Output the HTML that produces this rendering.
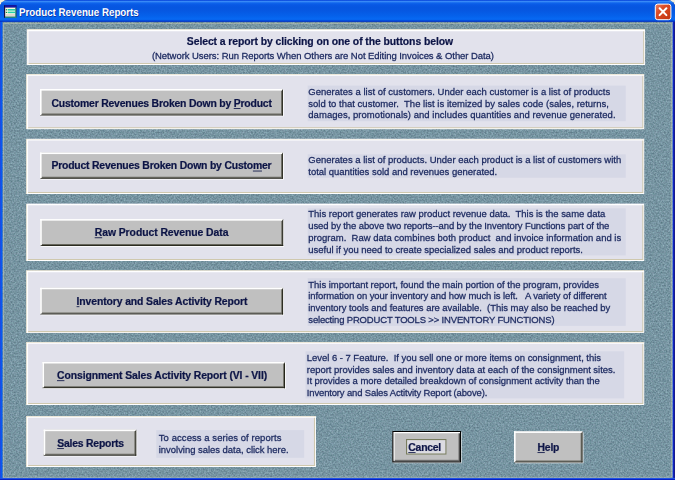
<!DOCTYPE html>
<html>
<head>
<meta charset="utf-8">
<title>Product Revenue Reports</title>
<style>
html,body{margin:0;padding:0;}
body{width:675px;height:480px;overflow:hidden;position:relative;background:#f3efdc;font-family:"Liberation Sans",Arial,sans-serif;}
#win{position:absolute;left:0;top:0;width:675px;height:480px;overflow:hidden;background:#7d97a6;border-radius:7.5px 7.5px 0 0;}
#noise,#chrome{position:absolute;left:0;top:0;}
#title{position:absolute;left:19px;top:5.45px;font-weight:bold;font-size:11.2px;line-height:14px;color:#fff;text-shadow:0.8px 0.8px 0.3px rgba(10,31,128,0.75);white-space:nowrap;transform-origin:0 0;transform:scaleX(0.872) rotate(0.03deg);}
#w{position:absolute;left:0;top:0;width:8000px;height:5690px;transform-origin:0 0;transform:scale(0.084375);}
#wt{position:absolute;left:0;top:0;width:8000px;height:5690px;transform-origin:0 0;transform:scale(0.084375) rotate(0.004deg);will-change:transform;}
.panel{position:absolute;background:#e2e2ec;box-sizing:border-box;box-shadow:inset 6px 6px 0 #d8d0b4, inset -11px -11px 0 #ffffff, inset 22px 22px 0 #ffffff, inset -23px -23px 0 #cfc8ae;}
.dbox{position:absolute;background:#d6d8e6;}
.ln{position:absolute;white-space:pre;line-height:140px;color:#16245c;-webkit-text-stroke:3px #16245c;}
.ln.b{font-weight:bold;color:#0a1244;-webkit-text-stroke:2.5px #0a1244;}
.btn{position:absolute;box-sizing:border-box;background:#c0c0c0;border-style:solid;border-width:19px 12px 12px 19px;border-color:#ffffff #24241a #24241a #ffffff;box-shadow:inset -10px -10px 0 #6a6a60, 11px 11px 0 rgba(255,255,255,0.9);}
.btn.def{border:12px solid #000;box-shadow:inset 15px 15px 0 #fff, inset -8px -8px 0 #303030, inset -20px -20px 0 #808080, 11px 11px 0 rgba(255,255,255,0.6);}
.focus{position:absolute;box-sizing:border-box;border:13px solid #787c5e;background:#dcdce2;}
u{text-decoration:underline;text-decoration-thickness:10px;text-underline-offset:14px;}
</style>
</head>
<body>
<div id="win">
<svg id="noise" width="675" height="480"><filter id="nf" x="0" y="0" width="100%" height="100%" color-interpolation-filters="sRGB"><feTurbulence type="fractalNoise" baseFrequency="0.62" numOctaves="2" seed="7"/><feColorMatrix type="matrix" values="0.31 0.05 0 0 0.285  0.31 0 0.05 0 0.402  0.31 0 0 0 0.478  0 0 0 0 1"/></filter><rect width="675" height="480" fill="#7d97a6" filter="url(#nf)"/></svg>
<svg id="chrome" width="675" height="480">
 <defs>
  <linearGradient id="tg" x1="0" y1="0" x2="0" y2="1">
   <stop offset="0" stop-color="#0c4cdc"/><stop offset="0.035" stop-color="#1458e4"/><stop offset="0.06" stop-color="#3c8ef8"/><stop offset="0.09" stop-color="#2a7cf2"/><stop offset="0.14" stop-color="#0e64ec"/><stop offset="0.22" stop-color="#0858e4"/><stop offset="0.35" stop-color="#0656e0"/><stop offset="0.5" stop-color="#0658e2"/><stop offset="0.7" stop-color="#0560ea"/><stop offset="0.86" stop-color="#0768f2"/><stop offset="0.92" stop-color="#0662ec"/><stop offset="0.95" stop-color="#0340d0"/><stop offset="1" stop-color="#0230c0"/>
  </linearGradient>
  <linearGradient id="lg" x1="0" y1="0" x2="1" y2="0"><stop offset="0" stop-color="#2446de"/><stop offset="0.22" stop-color="#1a4ce4"/><stop offset="0.35" stop-color="#0658f0"/><stop offset="1" stop-color="#0a5cf0"/></linearGradient>
  <linearGradient id="rg" x1="0" y1="0" x2="1" y2="0"><stop offset="0" stop-color="#6c98dc"/><stop offset="0.18" stop-color="#2a48d4"/><stop offset="0.3" stop-color="#1024c8"/><stop offset="0.55" stop-color="#0c20c0"/><stop offset="0.62" stop-color="#181c8c"/><stop offset="1" stop-color="#181c8c"/></linearGradient>
  <linearGradient id="bg" x1="0" y1="0" x2="0" y2="1"><stop offset="0" stop-color="#2e6cf0"/><stop offset="0.35" stop-color="#1c4ce0"/><stop offset="0.6" stop-color="#0c28c8"/><stop offset="1" stop-color="#0818b8"/></linearGradient>
  <linearGradient id="cg" x1="0" y1="0" x2="1" y2="1"><stop offset="0" stop-color="#ec8468"/><stop offset="0.35" stop-color="#dc4c26"/><stop offset="1" stop-color="#c03410"/></linearGradient>
 </defs>
 <!-- client edge -->
 <rect x="3.6" y="23.6" width="667.8" height="453.7" fill="none" stroke="#e6e0b4" stroke-opacity="0.42" stroke-width="0.9"/>
 <!-- frame -->
 <rect x="0" y="0" width="2.5" height="480" fill="url(#lg)"/>
 <rect x="672.4" y="0" width="2.6" height="480" fill="url(#rg)"/>
 <rect x="0" y="477.9" width="675" height="2.1" fill="url(#bg)"/>
 <rect x="0" y="0" width="675" height="21.9" fill="url(#tg)"/>
 <!-- app icon -->
 <rect x="4" y="5.2" width="12.4" height="12.6" fill="#10104a"/>
 <rect x="5" y="5.2" width="11.4" height="2.4" fill="#1414a8"/>
 <rect x="5.2" y="7.6" width="10.4" height="9.2" fill="#fffbe2"/>
 <rect x="15.4" y="7.6" width="1" height="10.2" fill="#1e8a74"/>
 <rect x="5" y="16.6" width="11.4" height="1.2" fill="#2a9a86"/>
 <rect x="7.6" y="9" width="7.4" height="1.6" fill="#22d2aa"/>
 <rect x="7.6" y="11.6" width="7.4" height="1.6" fill="#22d2aa"/>
 <rect x="5.8" y="9.2" width="1.2" height="1.2" fill="#1a8a3a"/>
 <rect x="5.8" y="11.8" width="1.2" height="1.2" fill="#1a8a3a"/>
 <rect x="5.8" y="14.6" width="9.4" height="0.8" fill="#b4a6b0"/>
 <!-- close button -->
 <rect x="655.3" y="4.1" width="15.6" height="15.6" rx="2.4" fill="url(#cg)" stroke="#ffffff" stroke-width="1"/>
 <path d="M659.6 8.3 L666.4 15.1 M666.4 8.3 L659.6 15.1" stroke="#ffffff" stroke-width="2" stroke-linecap="round" fill="none"/>
</svg>
<div id="title">Product Revenue Reports</div>
<div id="w">
<div class="panel" style="left:316.4px;top:348.4px;width:7329.2px;height:421.9px"></div>
<div class="panel" style="left:310.5px;top:877.0px;width:7325.6px;height:655.4px"></div>
<div class="panel" style="left:310.5px;top:1644.4px;width:7325.6px;height:654.8px"></div>
<div class="panel" style="left:310.5px;top:2411.9px;width:7325.6px;height:680.3px"></div>
<div class="panel" style="left:310.5px;top:3204.7px;width:7325.6px;height:740.7px"></div>
<div class="panel" style="left:310.5px;top:4053.3px;width:7325.6px;height:746.7px"></div>
<div class="panel" style="left:310.5px;top:4930.4px;width:3433.5px;height:603.3px"></div>
<div class="dbox" style="left:3645.6px;top:1014.5px;width:3770.1px;height:421.9px"></div>
<div class="dbox" style="left:3645.6px;top:1828.7px;width:3770.1px;height:278.5px"></div>
<div class="dbox" style="left:3645.6px;top:2468.7px;width:3770.1px;height:558.2px"></div>
<div class="dbox" style="left:3645.6px;top:3298.4px;width:3770.1px;height:564.1px"></div>
<div class="dbox" style="left:3620.7px;top:4163.6px;width:3777.2px;height:558.2px"></div>
<div class="dbox" style="left:1852.4px;top:5097.5px;width:1752.9px;height:328.3px"></div>
<div class="btn" style="left:473.5px;top:1055.4px;width:2879.4px;height:312.3px"></div>
<div class="btn" style="left:473.5px;top:1806.8px;width:2879.4px;height:311.1px"></div>
<div class="btn" style="left:475.9px;top:2596.1px;width:2880.6px;height:319.4px"></div>
<div class="btn" style="left:475.9px;top:3409.2px;width:2879.4px;height:317.0px"></div>
<div class="btn" style="left:503.1px;top:4288.6px;width:2874.7px;height:311.1px"></div>
<div class="btn" style="left:517.3px;top:5091.0px;width:1098.1px;height:308.7px"></div>
<div class="btn def" style="left:4649.5px;top:5108.1px;width:814.2px;height:372.1px"></div>
<div class="focus" style="left:4811.9px;top:5203.0px;width:480.0px;height:184.9px"></div>
<div class="btn" style="left:6091.9px;top:5111.7px;width:811.9px;height:368.6px"></div>
</div>
<div id="wt">
<div class="ln" style="left:3653.9px;top:1014.4px;font-size:113.0px;letter-spacing:-0.01px">Generates a list of customers. Under each customer is a list of products</div>
<div class="ln" style="left:3653.9px;top:1154.4px;font-size:113.0px;letter-spacing:-0.02px">sold to that customer.  The list is itemized by sales code (sales, returns,</div>
<div class="ln" style="left:3653.9px;top:1294.3px;font-size:113.0px;letter-spacing:0.25px">damages, promotionals) and includes quantities and revenue generated.</div>
<div class="ln" style="left:3653.9px;top:1827.4px;font-size:113.0px;letter-spacing:-0.21px">Generates a list of products. Under each product is a list of customers with</div>
<div class="ln" style="left:3653.9px;top:1967.4px;font-size:113.0px;letter-spacing:-0.37px">total quantities sold and revenues generated.</div>
<div class="ln" style="left:3653.9px;top:2465.1px;font-size:113.0px;letter-spacing:-0.47px">This report generates raw product revenue data.  This is the same data</div>
<div class="ln" style="left:3653.9px;top:2605.0px;font-size:113.0px;letter-spacing:-1.47px">used by the above two reports--and by the Inventory Functions part of the</div>
<div class="ln" style="left:3653.9px;top:2745.0px;font-size:113.0px;letter-spacing:-0.23px">program.  Raw data combines both product  and invoice information and is</div>
<div class="ln" style="left:3653.9px;top:2885.0px;font-size:113.0px;letter-spacing:-0.46px">useful if you need to create specialized sales and product reports.</div>
<div class="ln" style="left:3653.9px;top:3299.4px;font-size:113.0px;letter-spacing:-0.58px">This important report, found the main portion of the program, provides</div>
<div class="ln" style="left:3653.9px;top:3439.4px;font-size:113.0px;letter-spacing:-1.31px">information on your inventory and how much is left.   A variety of different</div>
<div class="ln" style="left:3653.9px;top:3579.4px;font-size:113.0px;letter-spacing:-0.79px">inventory tools and features are available.  (This may also be reached by</div>
<div class="ln" style="left:3653.9px;top:3719.3px;font-size:113.0px;letter-spacing:-2.21px">selecting PRODUCT TOOLS &gt;&gt; INVENTORY FUNCTIONS)</div>
<div class="ln" style="left:3636.1px;top:4165.8px;font-size:113.0px;letter-spacing:-0.6px">Level 6 - 7 Feature.  If you sell one or more items on consignment, this</div>
<div class="ln" style="left:3636.1px;top:4305.8px;font-size:113.0px;letter-spacing:-0.49px">report provides sales and inventory data at each of the consignment sites.</div>
<div class="ln" style="left:3636.1px;top:4445.7px;font-size:113.0px;letter-spacing:-0.82px">It provides a more detailed breakdown of consignment activity than the</div>
<div class="ln" style="left:3636.1px;top:4585.7px;font-size:113.0px;letter-spacing:-2.04px">Inventory and Sales Actitvity Report (above).</div>
<div class="ln" style="left:1882.1px;top:5122.3px;font-size:113.0px;letter-spacing:0.55px">To access a series of reports</div>
<div class="ln" style="left:1882.1px;top:5262.2px;font-size:113.0px;letter-spacing:-0.62px">involving sales data, click here.</div>
<div class="ln b" style="left:2213.9px;top:422.7px;font-size:124.0px;letter-spacing:-1.26px">Select a report by clicking on one of the buttons below</div>
<div class="ln" style="left:1800.3px;top:590.1px;font-size:113.0px;letter-spacing:-0.93px">(Network Users: Run Reports When Others are Not Editing Invoices &amp; Other Data)</div>
<div class="ln b" style="left:609.2px;top:1152.8px;font-size:124.0px;letter-spacing:-2.59px">Customer Revenues Broken Down by <u>P</u>roduct</div>
<div class="ln b" style="left:609.2px;top:1894.7px;font-size:124.0px;letter-spacing:-2.68px">Product Revenues Broken Down by Custo<u>m</u>er</div>
<div class="ln b" style="left:1122.4px;top:2686.4px;font-size:124.0px;letter-spacing:-1.16px"><u>R</u>aw Product Revenue Data</div>
<div class="ln b" style="left:907.9px;top:3503.0px;font-size:124.0px;letter-spacing:-1.72px"><u>I</u>nventory and Sales Activity Report</div>
<div class="ln b" style="left:675.6px;top:4380.1px;font-size:124.0px;letter-spacing:-1.58px"><u>C</u>onsignment Sales Activity Report (VI - VII)</div>
<div class="ln b" style="left:677.9px;top:5184.8px;font-size:124.0px;letter-spacing:-2.81px"><u>S</u>ales Reports</div>
<div class="ln b" style="left:4839.1px;top:5229.8px;font-size:124.0px;letter-spacing:-3.18px"><u>C</u>ancel</div>
<div class="ln b" style="left:6370.4px;top:5232.2px;font-size:124.0px;letter-spacing:-2.88px"><u>H</u>elp</div>
</div>
</div>
</body>
</html>
